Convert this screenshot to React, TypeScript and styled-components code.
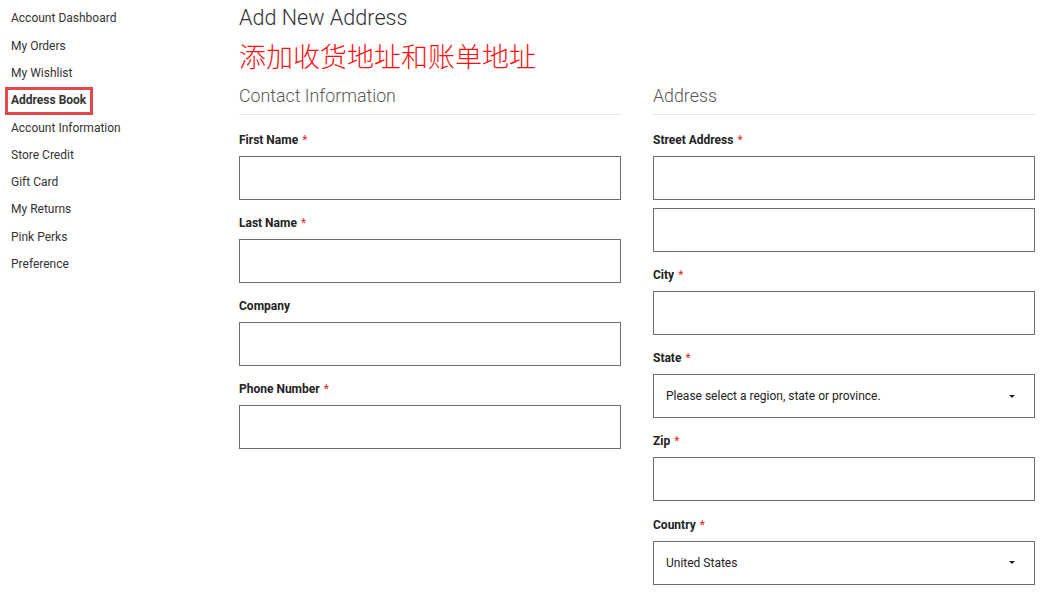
import React from 'react';
import styled, { createGlobalStyle } from 'styled-components';

interface FieldData {
  label: string
  required?: boolean
  kind?: 'input' | 'select'
  value?: string
  extra?: boolean
}

const GlobalStyle = createGlobalStyle`
  html, body {
    margin: 0;
    padding: 0;
    background: #fff;
  }
  body {
    font-family: Roboto, "Liberation Sans", Arial, sans-serif;
    color: #222;
  }
`;

const Page = styled.div`
  display: grid;
  grid-template-columns: 239px 1fr;
  width: 1049px;
  height: 600px;
  overflow: hidden;
`;

const Sidebar = styled.ul`
  list-style: none;
  margin: 0;
  padding: 5.4px 0 0 5px;
  display: flex;
  flex-direction: column;
  align-items: flex-start;
`;

const NavItem = styled.li<{ $active?: boolean }>`
  font-size: 12px;
  line-height: 15.3px;
  padding: 3px 4px 3px 3px;
  color: #333;
  font-weight: ${p => (p.$active ? 700 : 400)};
  border: 3px solid ${p => (p.$active ? '#e4484a' : 'transparent')};
  white-space: nowrap;
`;

const Main = styled.div`
  display: flex;
  flex-direction: column;
`;

const Title = styled.h1`
  margin: 0;
  padding-top: 5px;
  font-size: 21.6px;
  line-height: 26px;
  font-weight: 300;
  color: #333;
`;

const Note = styled.div`
  margin-top: 9px;
  font-family: "Noto Sans CJK SC", sans-serif;
  font-size: 27px;
  line-height: 32px;
  font-weight: 300;
  color: #ff0f0f;
`;

const Columns = styled.div`
  display: grid;
  grid-template-columns: 382px 382px;
  column-gap: 32px;
  margin-top: 12px;
`;

const Column = styled.section`
  display: flex;
  flex-direction: column;
`;

const ColumnTitle = styled.h2`
  margin: 0 0 16.5px 0;
  padding-bottom: 6px;
  font-size: 17.8px;
  line-height: 24px;
  font-weight: 300;
  color: #575757;
  border-bottom: 1px solid #e6e6e6;
`;

const Field = styled.div`
  display: flex;
  flex-direction: column;
  margin-bottom: 15.3px;
`;

const Label = styled.label`
  font-size: 12px;
  line-height: 16px;
  font-weight: 700;
  color: #222;
  margin-bottom: 8px;
`;

const Star = styled.span`
  color: #e02b27;
  margin-left: 4px;
  font-weight: 400;
`;

const Box = styled.div<{ $gapTop?: boolean }>`
  box-sizing: border-box;
  height: 44px;
  border: 1px solid #6e6e6e;
  background: #fff;
  display: flex;
  align-items: center;
  justify-content: space-between;
  padding: 0 19px 0 12px;
  font-size: 12px;
  color: #222;
  margin-top: ${p => (p.$gapTop ? '8px' : '0')};
`;

const Caret = styled.span`
  width: 0;
  height: 0;
  border-left: 3px solid transparent;
  border-right: 3px solid transparent;
  border-top: 3px solid #222;
`;

const contactFields: FieldData[] = [
  { label: 'First Name', required: true },
  { label: 'Last Name', required: true },
  { label: 'Company' },
  { label: 'Phone Number', required: true }
];

const addressFields: FieldData[] = [
  { label: 'Street Address', required: true, extra: true },
  { label: 'City', required: true },
  { label: 'State', required: true, kind: 'select', value: 'Please select a region, state or province.' },
  { label: 'Zip', required: true },
  { label: 'Country', required: true, kind: 'select', value: 'United States' }
];

const navItems = [
  'Account Dashboard',
  'My Orders',
  'My Wishlist',
  'Address Book',
  'Account Information',
  'Store Credit',
  'Gift Card',
  'My Returns',
  'Pink Perks',
  'Preference'
];

const FormField = ({ f }: { f: FieldData }) => (
  <Field>
    <Label>
      {f.label}
      {f.required && <Star>*</Star>}
    </Label>
    <Box>
      {f.kind === 'select' && (
        <>
          <span>{f.value}</span>
          <Caret />
        </>
      )}
    </Box>
    {f.extra && <Box $gapTop />}
  </Field>
);

const App = () => {
  return (
    <Page>
      <GlobalStyle />
      <Sidebar>
        {navItems.map(n => (
          <NavItem key={n} $active={n === 'Address Book'}>
            {n}
          </NavItem>
        ))}
      </Sidebar>
      <Main>
        <Title>Add New Address</Title>
        <Note>添加收货地址和账单地址</Note>
        <Columns>
          <Column>
            <ColumnTitle>Contact Information</ColumnTitle>
            {contactFields.map(f => (
              <FormField key={f.label} f={f} />
            ))}
          </Column>
          <Column>
            <ColumnTitle>Address</ColumnTitle>
            {addressFields.map(f => (
              <FormField key={f.label} f={f} />
            ))}
          </Column>
        </Columns>
      </Main>
    </Page>
  );
};

export default App;
